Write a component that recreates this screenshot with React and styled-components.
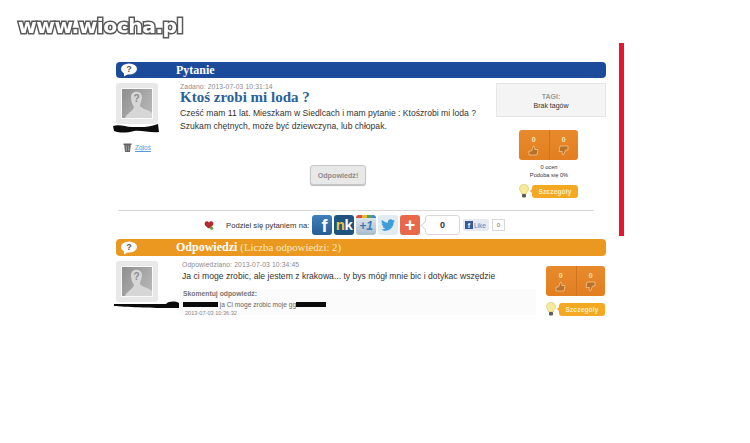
import React from 'react';
import styled, { createGlobalStyle } from 'styled-components';
import { FaTwitter } from 'react-icons/fa';

const GlobalStyle = createGlobalStyle`
  html, body { margin: 0; padding: 0; background: #ffffff; }
  body { font-family: "Liberation Sans", Arial, sans-serif; color: #333333; }
`;

const Page = styled.div`
  position: relative;
  width: 750px;
  height: 443px;
  overflow: hidden;
  padding-top: 62px;
  box-sizing: border-box;
`;

const Watermark = styled.div`
  position: absolute;
  left: 18px;
  top: 9px;
  font-family: "DejaVu Sans", sans-serif;
  font-weight: 700;
  font-size: 20.3px;
  line-height: 34px;
  letter-spacing: -0.5px;
  color: #ffffff;
  -webkit-text-stroke: 3px #5a5a5a;
  paint-order: stroke fill;
  filter: blur(0.3px);
`;

const RedLine = styled.div`
  position: absolute;
  left: 619px;
  top: 43px;
  width: 5px;
  height: 193px;
  background: #e3182d;
`;

const Column = styled.main`
  width: 490px;
  margin-left: 116px;
`;

const Bar = styled.div`
  display: flex;
  align-items: center;
  height: ${(p) => p.$height}px;
  padding-left: 5px;
  border-radius: 4px;
  background: ${(p) => p.$color};
`;

const BarTitle = styled.h2`
  margin: 0 0 0 39px;
  font-family: "Liberation Serif", serif;
  font-size: 12px;
  font-weight: 700;
  color: #ffffff;
  span {
    font-size: 10.8px;
    font-weight: 400;
    color: #f8e8c8;
  }
`;

const Entry = styled.section`
  display: grid;
  grid-template-columns: 64px 1fr ${(p) => p.$side}px;
  height: ${(p) => p.$height}px;
  padding-top: 5px;
  box-sizing: border-box;
`;

const AvatarCol = styled.div`
  display: flex;
  flex-direction: column;
  align-items: flex-start;
`;

const AvatarFrame = styled.div`
  width: 42px;
  height: 41px;
  padding: 5px;
  box-sizing: border-box;
  background: #e8e8e8;
  border-radius: 3px;
`;

const AvatarImage = styled.svg`
  display: block;
  width: 32px;
  height: 31px;
  box-sizing: border-box;
  border: 1px solid #fafafa;
`;

const Scribble = styled.svg`
  display: block;
  margin-left: ${(p) => p.$left}px;
  margin-top: ${(p) => p.$top}px;
`;

const ReportRow = styled.div`
  display: flex;
  align-items: center;
  gap: 3px;
  margin: 10px 0 0 7px;
  font-size: 6.5px;
  color: #5a9be0;
  text-decoration: underline;
`;

const MainCol = styled.div`
  display: flex;
  flex-direction: column;
  min-width: 0;
  padding-left: ${(p) => p.$indent || 0}px;
`;

const DateLine = styled.div`
  font-size: 6.8px;
  line-height: 7px;
  color: #8c8c8c;
  letter-spacing: 0.1px;
`;

const Question = styled.h1`
  margin: 0 0 2px;
  font-family: "Liberation Serif", serif;
  font-size: 15px;
  line-height: 15px;
  font-weight: 700;
  color: #2a6299;
`;

const Body = styled.p`
  margin: 0;
  font-size: 8.6px;
  line-height: 13px;
  color: #333333;
  white-space: nowrap;
`;

const ReplyButton = styled.button`
  align-self: center;
  width: 56px;
  height: 20px;
  margin-top: 32px;
  padding: 0;
  font: 700 7.2px "Liberation Sans", sans-serif;
  color: #8d8d8d;
  background: #e8e8e8;
  border: 1px solid #c6c6c6;
  border-radius: 3px;
  box-shadow: 0 1px 1px #bbbbbb;
`;

const SideCol = styled.div`
  display: flex;
  flex-direction: column;
`;

const TagBox = styled.div`
  width: 110px;
  height: 34px;
  box-sizing: border-box;
  padding-top: 8px;
  text-align: center;
  background: #f4f4f4;
  border: 1px solid #e6e6e6;
  font-size: 7px;
  line-height: 9px;
  color: #333333;
  b {
    display: block;
    color: #999999;
  }
`;

const VotePanel = styled.div`
  width: 60px;
  margin: ${(p) => p.$top}px 0 0 ${(p) => p.$left}px;
`;

const Votes = styled.div`
  display: grid;
  grid-template-columns: 1fr 1fr;
  width: 59px;
  height: 30px;
  border-radius: 3px;
  background: linear-gradient(#e78a2c, #e27f20);
`;

const VoteCell = styled.div`
  display: flex;
  flex-direction: column;
  align-items: center;
  padding-top: 6px;
  box-sizing: border-box;
  font-size: 7px;
  line-height: 7px;
  font-weight: 700;
  color: #ffe6b0;
  & + & {
    border-left: 1px solid #cf7420;
  }
`;

const Score = styled.div`
  margin-top: 3px;
  text-align: center;
  font-size: 5.7px;
  line-height: 8px;
  color: #333333;
`;

const DetailsRow = styled.div`
  display: flex;
  align-items: center;
  gap: 3px;
  margin-top: ${(p) => p.$top}px;
`;

const DetailsButton = styled.div`
  position: relative;
  width: 46px;
  height: 13px;
  border-radius: 3px;
  background: #f3a922;
  font-size: 6.5px;
  font-weight: 700;
  line-height: 13px;
  text-align: center;
  color: #fdeec0;
  letter-spacing: 0.2px;
  &::before {
    content: '';
    position: absolute;
    left: -2px;
    top: 4px;
    width: 0;
    height: 0;
    border-top: 2.5px solid transparent;
    border-bottom: 2.5px solid transparent;
    border-right: 2px solid #f3a922;
  }
`;

const Divider = styled.hr`
  width: 476px;
  height: 1px;
  margin: 0 0 0 2px;
  border: 0;
  background: #d8d8d8;
`;

const ShareRow = styled.div`
  display: flex;
  align-items: center;
  height: 28px;
  padding-left: 88px;
  box-sizing: border-box;
`;

const ShareText = styled.span`
  width: 83px;
  margin: 0 3px 0 12px;
  font-size: 7.7px;
  color: #333333;
  white-space: nowrap;
`;

const ShareIcon = styled.div`
  position: relative;
  display: flex;
  align-items: center;
  justify-content: center;
  width: 20px;
  height: 20px;
  margin-right: 2px;
  border-radius: 3px;
  background: ${(p) => p.$bg};
  color: ${(p) => p.$fg || '#ffffff'};
  font: 700 ${(p) => p.$size || 13}px/20px "Liberation Sans", sans-serif;
`;

const FacebookF = styled.span`
  margin: 3px 0 0 5px;
  line-height: 17px;
`;

const NkMark = styled.span`
  letter-spacing: -0.5px;
  i {
    font-style: normal;
    color: #e8c54a;
  }
`;

const PlusOneStripe = styled.div`
  position: absolute;
  left: 0;
  top: 0;
  width: 100%;
  height: 3px;
  border-radius: 3px 3px 0 0;
  background: linear-gradient(90deg, #d9503f 0 30%, #e6b93c 30% 55%, #4fa65a 55% 80%, #4a84c9 80%);
`;

const PlusOneMark = styled.span`
  margin-top: 3px;
  line-height: 17px;
  font-style: italic;
`;

const CountBubble = styled.div`
  position: relative;
  width: 35px;
  height: 20px;
  margin: 0 3px;
  border: 1px solid #d8d8d8;
  border-radius: 3px;
  box-sizing: border-box;
  font-size: 9px;
  font-weight: 700;
  line-height: 18px;
  text-align: center;
  color: #333333;
  &::before {
    content: '';
    position: absolute;
    left: -4px;
    top: 6px;
    width: 6px;
    height: 6px;
    background: #ffffff;
    border-left: 1px solid #d8d8d8;
    border-bottom: 1px solid #d8d8d8;
    transform: rotate(45deg);
  }
`;

const LikeButton = styled.div`
  display: flex;
  align-items: center;
  gap: 1px;
  width: 26px;
  height: 12px;
  padding-left: 2px;
  box-sizing: border-box;
  background: #e6e9f2;
  border-radius: 2px;
  font-size: 6.5px;
  color: #6a7fae;
  b {
    width: 8px;
    height: 8px;
    background: #3b5998;
    color: #ffffff;
    font-size: 7px;
    line-height: 9px;
    text-align: center;
  }
`;

const LikeCount = styled.div`
  width: 13px;
  height: 12px;
  margin-left: 3px;
  border: 1px solid #d8d8d8;
  box-sizing: border-box;
  font-size: 6px;
  line-height: 10px;
  text-align: center;
  color: #666666;
`;

const AnswerText = styled(Body)`
  margin-top: 2px;
`;

const CommentBox = styled.div`
  height: 26px;
  margin: 6px 10px 0 -2px;
  padding: 0 0 0 3px;
  background: #fbfbfb;
`;

const CommentTitle = styled.div`
  font-size: 6.8px;
  line-height: 9px;
  font-weight: 700;
  color: #777777;
`;

const CommentLine = styled.div`
  display: flex;
  align-items: center;
  margin-top: 3px;
  font-size: 6.6px;
  line-height: 7px;
  color: #666666;
  white-space: pre;
`;

const CommentDate = styled.div`
  margin: 2px 0 0 2px;
  font-size: 5.6px;
  line-height: 7px;
  color: #888888;
`;

const Redaction = styled.i`
  display: block;
  width: ${(p) => p.$w}px;
  height: 5px;
  background: #0b0b0b;
`;

const BubbleIcon = () => (
  <svg width="16" height="14" viewBox="0 0 16 14">
    <ellipse cx="8" cy="6" rx="8" ry="5.5" fill="#ffffff" />
    <path d="M3 9 L3 13.5 L8 10.5 Z" fill="#ffffff" />
    <text x="8" y="9.3" textAnchor="middle" fontSize="9" fontWeight="700" fontFamily="Liberation Sans" fill="#555555">?</text>
  </svg>
);

const Avatar = ({ id }) => (
  <AvatarFrame>
    <AvatarImage viewBox="0 0 30 29">
      <defs>
        <linearGradient id={id} x1="0" y1="0" x2="1" y2="0.6">
          <stop offset="0" stopColor="#8f8f8f" />
          <stop offset="1" stopColor="#b4b4b4" />
        </linearGradient>
      </defs>
      <rect width="30" height="29" fill={`url(#${id})`} />
      <path d="M9 8 C9 1 20 1 20 8 C20 12 18 14 18 17 C20 20 27 21 30 24 L30 29 L3 29 C5 24 11 22 12 18 C10 15 9 12 9 8 Z" fill="#d6d6d6" />
      <text x="14.5" y="13" textAnchor="middle" fontSize="10" fontWeight="700" fontFamily="Liberation Sans" fill="#8c8c8c">?</text>
    </AvatarImage>
  </AvatarFrame>
);

const Trash = () => (
  <svg width="9" height="9" viewBox="0 0 9 9">
    <path d="M0.5 0.5 H8.5 V2 H7.8 L7 9 H2 L1.2 2 H0.5 Z" fill="#666666" />
    <path d="M3.3 2.5 V8 M5.7 2.5 V8" stroke="#b5b5b5" strokeWidth="0.7" />
  </svg>
);

const Bulb = () => (
  <svg width="10" height="14" viewBox="0 0 10 14">
    <path d="M5 0.5 C8 0.5 9.5 2.5 9.5 4.6 C9.5 6.8 7.5 7.8 7.3 10 L2.7 10 C2.5 7.8 0.5 6.8 0.5 4.6 C0.5 2.5 2 0.5 5 0.5 Z" fill="#f5eb9a" stroke="#cfc36a" strokeWidth="0.6" />
    <rect x="3" y="10" width="4" height="3.4" rx="0.8" fill="#5d5d50" />
  </svg>
);

const Thumb = ({ down }) => (
  <svg width="11" height="11" viewBox="0 0 11 11" style={{ marginTop: 2, transform: down ? 'rotate(180deg)' : 'none' }}>
    <path d="M1 6 H3.5 L5.5 1 C7 1 7 3 6.6 4.5 H10 L9 10 H1 Z" fill="#b9702a" stroke="#f3cf9c" strokeWidth="0.7" />
  </svg>
);

const Rose = () => (
  <svg width="10" height="10" viewBox="0 0 10 10">
    <path d="M5 8.5 C1 6 0 4 1 2.2 C2 0.6 4 1 5 2.4 C6 1 8 0.6 9 2.2 C10 4 9 6 5 8.5 Z" fill="#b02a30" />
    <circle cx="7.6" cy="8.2" r="1.5" fill="#5f9b45" />
  </svg>
);

const VoteBox = () => (
  <Votes>
    <VoteCell>0<Thumb /></VoteCell>
    <VoteCell>0<Thumb down /></VoteCell>
  </Votes>
);

const Details = ({ top }) => (
  <DetailsRow $top={top}>
    <Bulb />
    <DetailsButton>Szczegóły</DetailsButton>
  </DetailsRow>
);

export default function App() {
  return (
    <Page>
      <GlobalStyle />
      <Watermark>www.wiocha.pl</Watermark>
      <RedLine />
      <Column>
        <Bar $color="#1c4b9b" $height={16}>
          <BubbleIcon />
          <BarTitle>Pytanie</BarTitle>
        </Bar>
        <Entry $side={110} $height={132}>
          <AvatarCol>
            <Avatar id="avatar-question" />
            <Scribble $left={-4} $top={0} width="48" height="9" viewBox="0 0 48 9">
              <path d="M1 2 C8 0 13 3 20 3 C28 3 36 4 46 0 L47 8 C38 9 30 6 22 7 C14 9 8 9 2 7 Z" fill="#0b0b0b" />
            </Scribble>
            <ReportRow><Trash />Zgłoś</ReportRow>
          </AvatarCol>
          <MainCol>
            <DateLine>Zadano: 2013-07-03 10:31:14</DateLine>
            <Question>Ktoś zrobi mi loda ?</Question>
            <Body>Cześć mam 11 lat. Mieszkam w Siedlcach i mam pytanie : Ktośzrobi mi loda ?</Body>
            <Body>Szukam chętnych, może być dziewczyna, lub chłopak.</Body>
            <ReplyButton>Odpowiedź!</ReplyButton>
          </MainCol>
          <SideCol>
            <TagBox><b>TAGI:</b>Brak tagów</TagBox>
            <VotePanel $top={13} $left={23}>
              <VoteBox />
              <Score>0 ocen<br />Podoba się 0%</Score>
              <Details top={5} />
            </VotePanel>
          </SideCol>
        </Entry>
        <Divider />
        <ShareRow>
          <Rose />
          <ShareText>Podziel się pytaniem na:</ShareText>
          <ShareIcon $bg="linear-gradient(#3f7fbd, #265d94)" $size={18}><FacebookF>f</FacebookF></ShareIcon>
          <ShareIcon $bg="#1f5480" $size={15}><NkMark><i>n</i>k</NkMark></ShareIcon>
          <ShareIcon $bg="linear-gradient(#e4ebf0, #a9bccb)" $fg="#3a7ab5" $size={12}>
            <PlusOneStripe />
            <PlusOneMark>+1</PlusOneMark>
          </ShareIcon>
          <ShareIcon $bg="#e1ebf2" $fg="#3e9fd8" $size={14}><FaTwitter /></ShareIcon>
          <ShareIcon $bg="#e8694a" $size={18}>+</ShareIcon>
          <CountBubble>0</CountBubble>
          <LikeButton><b>f</b>Like</LikeButton>
          <LikeCount>0</LikeCount>
        </ShareRow>
        <Bar $color="#ea981f" $height={17}>
          <BubbleIcon />
          <BarTitle>Odpowiedzi <span>(Liczba odpowiedzi: 2)</span></BarTitle>
        </Bar>
        <Entry $side={60} $height={70}>
          <AvatarCol>
            <Avatar id="avatar-answer" />
            <Scribble $left={-2} $top={-1} width="66" height="8" viewBox="0 0 66 8">
              <path d="M0 3 H52 C55 0 61 0 65 2 V7 H50 C40 7 10 6 0 5 Z" fill="#0b0b0b" />
            </Scribble>
          </AvatarCol>
          <MainCol $indent={2}>
            <DateLine>Odpowiedziano: 2013-07-03 10:34:45</DateLine>
            <AnswerText>Ja ci moge zrobic, ale jestem z krakowa... ty bys mógł mnie bic i dotykac wszędzie</AnswerText>
            <CommentBox>
              <CommentTitle>Skomentuj odpowiedź:</CommentTitle>
              <CommentLine>
                <Redaction $w={35} />
                {' ja Ci moge zrobic moje gg'}
                <Redaction $w={30} />
              </CommentLine>
              <CommentDate>2013-07-03 10:36:32</CommentDate>
            </CommentBox>
          </MainCol>
          <SideCol>
            <VotePanel $top={5} $left={0}>
              <VoteBox />
              <Details top={6} />
            </VotePanel>
          </SideCol>
        </Entry>
      </Column>
    </Page>
  );
}
